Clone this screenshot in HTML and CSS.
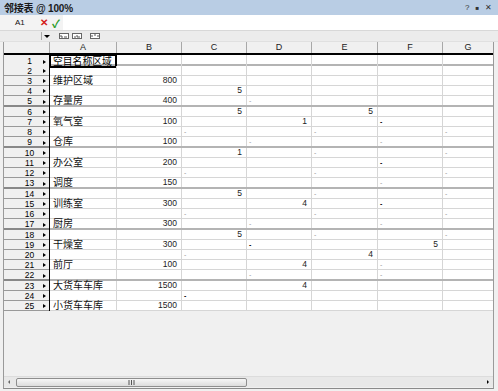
FILE: index.html
```html
<!DOCTYPE html>
<html lang="zh">
<head>
<meta charset="utf-8">
<title>邻接表</title>
<link rel="stylesheet" href="styles.css">
</head>
<body>
<div class="app">
  <div class="titlebar">
    <span class="title">邻接表 @ 100%</span>
    <span class="winbtns"><span>?</span><span class="pin">&#9632;</span><span>&#10005;</span></span>
  </div>
  <div class="formula">
    <div class="ref"><span class="cellref">A1</span><span class="cancel">&#10005;</span><span class="ok">&#10003;</span></div>
    <div class="input"></div>
  </div>
  <div class="toolbar">
    <span class="sep"></span>
    <span class="drop"></span>
    <span class="tb tb1"><svg width="10" height="6" viewBox="0 0 10 6"><rect x="0.5" y="0.5" width="9" height="5" fill="#fff" stroke="#666"/><path d="M2 2v2h2M5 4h3" stroke="#555" fill="none"/></svg></span>
    <span class="tb tb2"><svg width="10" height="6" viewBox="0 0 10 6"><rect x="0.5" y="0.5" width="9" height="5" fill="#fff" stroke="#666"/><path d="M2 4h2M5 2v2h3" stroke="#555" fill="none"/></svg></span>
    <span class="tb tb3"><svg width="10" height="6" viewBox="0 0 10 6"><rect x="0.5" y="0.5" width="9" height="5" fill="#fff" stroke="#666"/><path d="M2 2v2M4 2h2M8 2v2" stroke="#555" fill="none"/></svg></span>
  </div>
  <div class="pane">
    <div class="hdr">
      <div class="corner"></div><div class="ch">A</div><div class="ch">B</div><div class="ch">C</div><div class="ch">D</div><div class="ch">E</div><div class="ch">F</div><div class="ch last">G</div>
    </div>
    <div class="rows">
      <div class="row thick"><div class="rh"><span class="num">1</span><i class="tri"></i></div><div class="c sel"><span class="lbl">空目名称区域</span></div><div class="c"></div><div class="c"></div><div class="c"></div><div class="c"></div><div class="c"></div><div class="c"></div></div>
      <div class="row"><div class="rh"><span class="num">2</span><i class="tri"></i></div><div class="c"></div><div class="c"></div><div class="c"></div><div class="c"></div><div class="c"></div><div class="c"></div><div class="c"></div></div>
      <div class="row"><div class="rh"><span class="num">3</span><i class="tri"></i></div><div class="c t"><span class="lbl">维护区域</span></div><div class="c n">800</div><div class="c"></div><div class="c"></div><div class="c"></div><div class="c"></div><div class="c"></div></div>
      <div class="row"><div class="rh"><span class="num">4</span><i class="tri"></i></div><div class="c"></div><div class="c"></div><div class="c n">5</div><div class="c"></div><div class="c"></div><div class="c"></div><div class="c"></div></div>
      <div class="row thick"><div class="rh"><span class="num">5</span><i class="tri"></i></div><div class="c t"><span class="lbl">存量房</span></div><div class="c n">400</div><div class="c"></div><div class="c d">-</div><div class="c"></div><div class="c"></div><div class="c"></div></div>
      <div class="row"><div class="rh"><span class="num">6</span><i class="tri"></i></div><div class="c"></div><div class="c"></div><div class="c n">5</div><div class="c"></div><div class="c n">5</div><div class="c"></div><div class="c"></div></div>
      <div class="row"><div class="rh"><span class="num">7</span><i class="tri"></i></div><div class="c t"><span class="lbl">氧气室</span></div><div class="c n">100</div><div class="c"></div><div class="c n">1</div><div class="c"></div><div class="c d k">-</div><div class="c"></div></div>
      <div class="row"><div class="rh"><span class="num">8</span><i class="tri"></i></div><div class="c"></div><div class="c"></div><div class="c d">-</div><div class="c"></div><div class="c d">-</div><div class="c"></div><div class="c d">-</div></div>
      <div class="row thick"><div class="rh"><span class="num">9</span><i class="tri"></i></div><div class="c t"><span class="lbl">仓库</span></div><div class="c n">100</div><div class="c"></div><div class="c d">-</div><div class="c"></div><div class="c d">-</div><div class="c"></div></div>
      <div class="row"><div class="rh"><span class="num">10</span><i class="tri"></i></div><div class="c"></div><div class="c"></div><div class="c n">1</div><div class="c"></div><div class="c d">-</div><div class="c"></div><div class="c d">-</div></div>
      <div class="row"><div class="rh"><span class="num">11</span><i class="tri"></i></div><div class="c t"><span class="lbl">办公室</span></div><div class="c n">200</div><div class="c"></div><div class="c"></div><div class="c"></div><div class="c d k">-</div><div class="c"></div></div>
      <div class="row"><div class="rh"><span class="num">12</span><i class="tri"></i></div><div class="c"></div><div class="c"></div><div class="c d">-</div><div class="c"></div><div class="c d">-</div><div class="c"></div><div class="c d">-</div></div>
      <div class="row thick"><div class="rh"><span class="num">13</span><i class="tri"></i></div><div class="c t"><span class="lbl">调度</span></div><div class="c n">150</div><div class="c"></div><div class="c"></div><div class="c"></div><div class="c d">-</div><div class="c"></div></div>
      <div class="row"><div class="rh"><span class="num">14</span><i class="tri"></i></div><div class="c"></div><div class="c"></div><div class="c n">5</div><div class="c"></div><div class="c d">-</div><div class="c"></div><div class="c d">-</div></div>
      <div class="row"><div class="rh"><span class="num">15</span><i class="tri"></i></div><div class="c t"><span class="lbl">训练室</span></div><div class="c n">300</div><div class="c"></div><div class="c n">4</div><div class="c"></div><div class="c d k">-</div><div class="c"></div></div>
      <div class="row"><div class="rh"><span class="num">16</span><i class="tri"></i></div><div class="c"></div><div class="c"></div><div class="c d">-</div><div class="c"></div><div class="c d">-</div><div class="c"></div><div class="c d">-</div></div>
      <div class="row thick"><div class="rh"><span class="num">17</span><i class="tri"></i></div><div class="c t"><span class="lbl">厨房</span></div><div class="c n">300</div><div class="c"></div><div class="c d">-</div><div class="c"></div><div class="c d">-</div><div class="c"></div></div>
      <div class="row"><div class="rh"><span class="num">18</span><i class="tri"></i></div><div class="c"></div><div class="c"></div><div class="c n">5</div><div class="c"></div><div class="c d">-</div><div class="c"></div><div class="c d">-</div></div>
      <div class="row"><div class="rh"><span class="num">19</span><i class="tri"></i></div><div class="c t"><span class="lbl">干燥室</span></div><div class="c n">300</div><div class="c"></div><div class="c d k">-</div><div class="c"></div><div class="c n">5</div><div class="c"></div></div>
      <div class="row"><div class="rh"><span class="num">20</span><i class="tri"></i></div><div class="c"></div><div class="c"></div><div class="c d">-</div><div class="c"></div><div class="c n">4</div><div class="c"></div><div class="c"></div></div>
      <div class="row"><div class="rh"><span class="num">21</span><i class="tri"></i></div><div class="c t"><span class="lbl">前厅</span></div><div class="c n">100</div><div class="c"></div><div class="c n">4</div><div class="c"></div><div class="c d">-</div><div class="c"></div></div>
      <div class="row thick"><div class="rh"><span class="num">22</span><i class="tri"></i></div><div class="c"></div><div class="c"></div><div class="c"></div><div class="c d">-</div><div class="c"></div><div class="c d">-</div><div class="c"></div></div>
      <div class="row"><div class="rh"><span class="num">23</span><i class="tri"></i></div><div class="c t"><span class="lbl">大货车车库</span></div><div class="c n">1500</div><div class="c"></div><div class="c n">4</div><div class="c"></div><div class="c"></div><div class="c"></div></div>
      <div class="row"><div class="rh"><span class="num">24</span><i class="tri"></i></div><div class="c"></div><div class="c"></div><div class="c d k">-</div><div class="c"></div><div class="c"></div><div class="c"></div><div class="c"></div></div>
      <div class="row"><div class="rh"><span class="num">25</span><i class="tri"></i></div><div class="c t"><span class="lbl">小货车车库</span></div><div class="c n">1500</div><div class="c"></div><div class="c"></div><div class="c"></div><div class="c"></div><div class="c"></div></div>
    </div>
    <div class="filler"></div>
    <div class="hscroll">
      <span class="arr larr"></span>
      <span class="thumb"><svg width="7" height="5" viewBox="0 0 7 5"><path d="M1 0v5M3.5 0v5M6 0v5" stroke="#555" stroke-width="1"/></svg></span>
      <span class="track"></span>
      <span class="arr rarr"></span>
    </div>
  </div>
</div>
</body>
</html>
```
FILE: styles.css
```css
* { box-sizing: border-box; }
html, body { margin: 0; padding: 0; }
body {
  width: 498px;
  height: 391px;
  overflow: hidden;
  background: #f0f0f0;
  font-family: "Liberation Sans", "Noto Sans CJK SC", sans-serif;
  color: #000;
}
.app {
  width: 498px;
  height: 391px;
  display: flex;
  flex-direction: column;
  background: #f0f0f0;
}
.titlebar {
  height: 15px;
  flex: none;
  background: #b9cde4;
  display: flex;
  align-items: center;
  justify-content: space-between;
  padding: 0 6px 0 4px;
}
.title {
  font-family: "Liberation Sans", "Noto Sans CJK SC", sans-serif;
  font-weight: bold;
  font-size: 10px;
  color: #1a1a1a;
  letter-spacing: -0.2px;
}
.winbtns {
  display: flex;
  gap: 6px;
  font-size: 8px;
  color: #333;
  align-items: center;
}
.winbtns .pin { font-size: 6px; }
.formula {
  height: 16px;
  flex: none;
  display: flex;
  border-bottom: 1px solid #d8d8d8;
}
.ref {
  width: 63px;
  background: #f3f3f3;
  display: flex;
  align-items: center;
}
.cellref {
  font-size: 8px;
  margin-left: 15px;
  width: 25px;
  color: #111;
}
.cancel {
  color: #d42020;
  font-size: 10px;
  font-weight: bold;
  width: 12px;
}
.ok {
  color: #1f9a1f;
  font-size: 11px;
  font-weight: bold;
}
.input {
  flex: 1;
  background: #fff;
}
.toolbar {
  height: 11px;
  flex: none;
  display: flex;
  align-items: center;
  background: #ececec;
  border-bottom: 1px solid #e0e0e0;
}
.sep {
  width: 1px;
  height: 8px;
  background: #aaa;
  margin-left: 41px;
}
.drop {
  width: 0;
  height: 0;
  border-left: 3px solid transparent;
  border-right: 3px solid transparent;
  border-top: 3px solid #000;
  margin-left: 2px;
}
.tb { display: flex; }
.tb svg { display: block; }
.tb1 { margin-left: 9px; }
.tb2 { margin-left: 3px; }
.tb3 { margin-left: 8px; }

.pane {
  flex: 1;
  margin: 0 4px 2px 3px;
  border-left: 1px solid #9a9a9a;
  border-right: 1px solid #9a9a9a;
  border-bottom: 1px solid #8a8a8a;
  display: flex;
  flex-direction: column;
}
.hdr, .row {
  display: grid;
  grid-template-columns: 46px 67px 65px 65px 65px 66px 65px 50px;
}
.hdr {
  height: 13px;
  flex: none;
  background: #f0f0f0;
  border-bottom: 2px solid #000;
}
.corner, .ch {
  border-right: 1px solid #a8a8a8;
}
.ch {
  font-size: 9px;
  color: #222;
  text-align: center;
  line-height: 11px;
}
.ch.last { border-right: none; }
.rows { flex: none; background: #fff; }
.row {
  height: 10px;
  border-bottom: 1px solid #d6d6d6;
}
.row.thick {
  height: 11px;
  border-bottom: 2px solid #b4b4b4;
}
.rh {
  background: #f0f0f0;
  border-right: 1px solid #000;
  display: flex;
  align-items: center;
  box-shadow: inset 0 -1px 0 #999;
  margin-bottom: -1px;
}
.row.thick .rh { box-shadow: inset 0 -2px 0 #888; margin-bottom: -2px; }
.num {
  flex: 1;
  padding-left: 12px;
  text-align: center;
  font-size: 8.5px;
  line-height: 9px;
}
.tri {
  width: 0;
  height: 0;
  border-left: 3px solid #000;
  border-top: 2.5px solid transparent;
  border-bottom: 2.5px solid transparent;
  margin-right: 3px;
}
.c {
  border-right: 1px solid #d6d6d6;
  font-size: 8.5px;
  line-height: 9px;
  white-space: nowrap;
  color: #222;
}
.c:last-child { border-right: none; }
.t {
  display: flex;
  align-items: center;
  padding-left: 3px;
  color: #111;
}
.lbl {
  font-family: "Noto Sans CJK SC", sans-serif;
  font-size: 10px;
  line-height: 10px;
  height: 10px;
  display: block;
  margin-top: -1px;
}
.n {
  text-align: right;
  padding-right: 4px;
}
.d {
  color: #999;
  padding-left: 2px;
  font-size: 7px;
}
.d.k { color: #000; font-weight: bold; }
.sel {
  display: flex;
  align-items: center;
  border: 2px solid #000;
  margin: -1px 0 -2px -1px;
  padding-left: 2px;
  color: #000;
}
.sel .lbl { margin-top: 0; font-size: 9.8px; }
.filler { flex: 1; background: #f0f0f0; }
.hscroll {
  height: 11px;
  flex: none;
  display: flex;
  align-items: center;
  background: #e8e8e8;
  border-top: 1px solid #dcdcdc;
  margin-bottom: 1px;
}
.arr { width: 0; height: 0; border-top: 2px solid transparent; border-bottom: 2px solid transparent; }
.larr { border-right: 2px solid #666; margin-left: 4px; margin-right: 6px; }
.rarr { border-left: 2px solid #000; margin-right: 4px; }
.thumb {
  width: 231px;
  height: 9px;
  border: 1px solid #8e8e8e;
  border-radius: 2px;
  background: linear-gradient(#f6f6f6, #dcdcdc);
  display: flex;
  align-items: center;
  justify-content: center;
}
.thumb svg { display: block; }
.track { flex: 1; }
```
